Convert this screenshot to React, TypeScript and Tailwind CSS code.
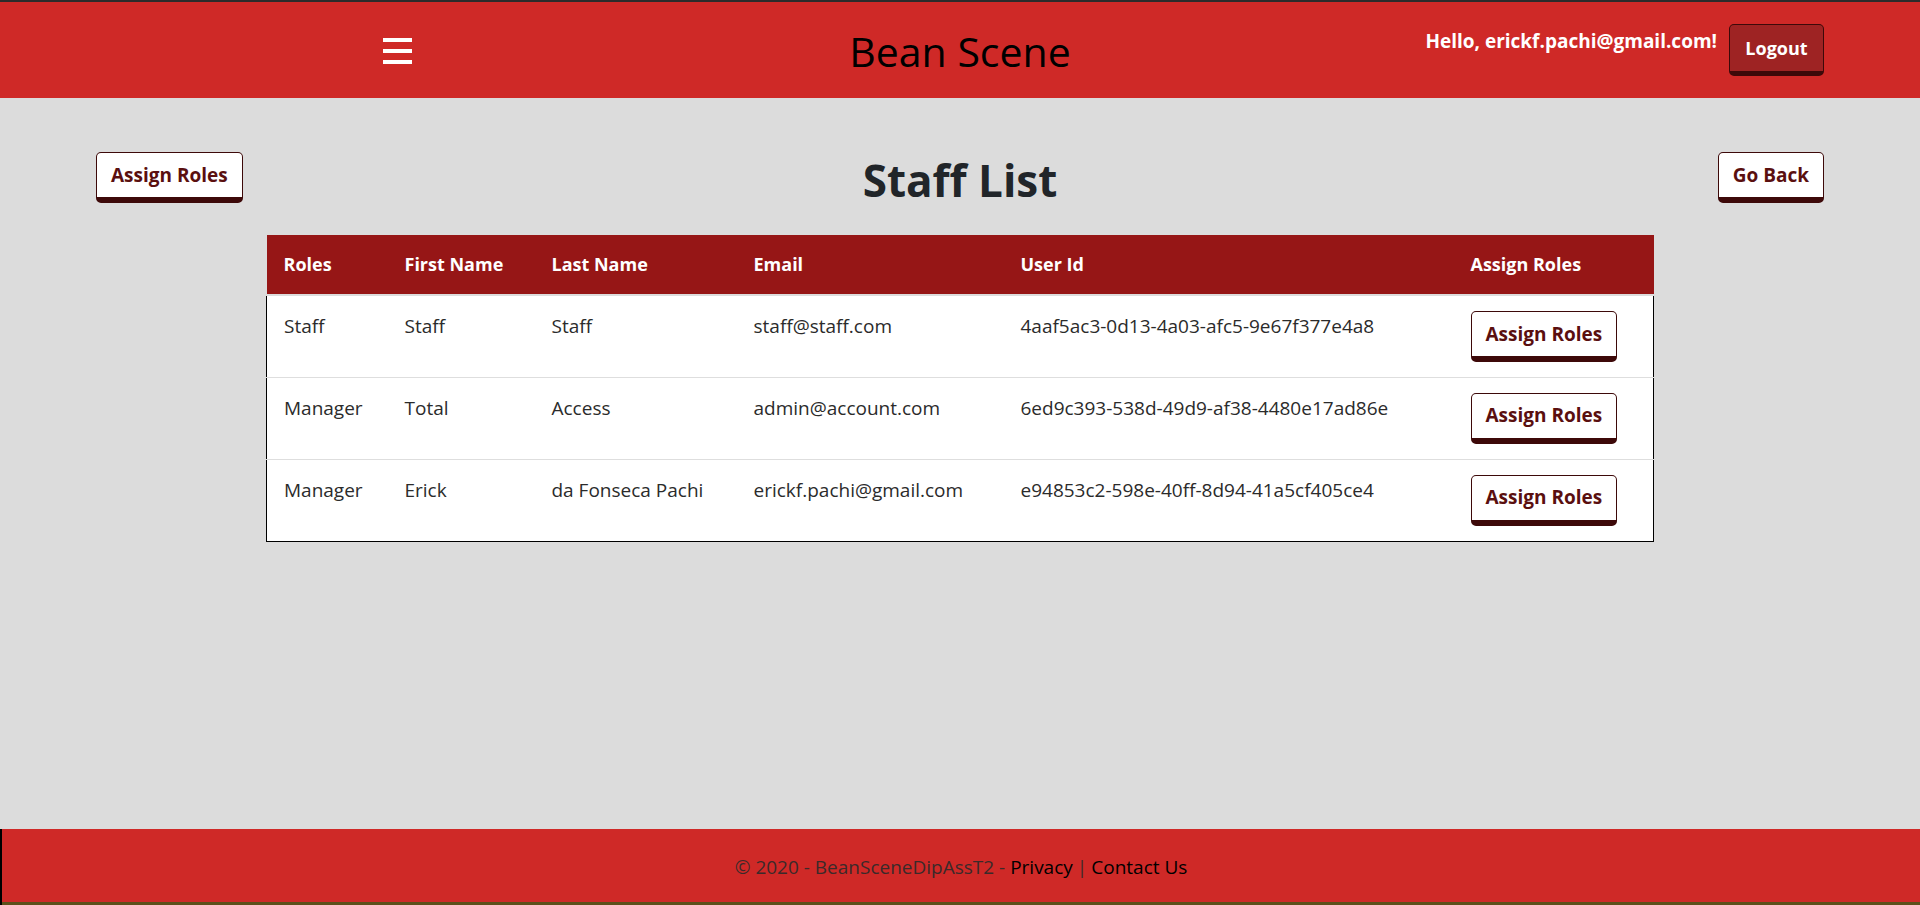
import React from 'react'

type Staff = { role: string; first: string; last: string; email: string; id: string }

const STAFF: Staff[] = [
  { role: 'Staff',   first: 'Staff', last: 'Staff',            email: 'staff@staff.com',         id: '4aaf5ac3-0d13-4a03-afc5-9e67f377e4a8' },
  { role: 'Manager', first: 'Total', last: 'Access',           email: 'admin@account.com',       id: '6ed9c393-538d-49d9-af38-4480e17ad86e' },
  { role: 'Manager', first: 'Erick', last: 'da Fonseca Pachi', email: 'erickf.pachi@gmail.com',  id: 'e94853c2-598e-40ff-8d94-41a5cf405ce4' },
]

function OutlineBtn({ children }: { children: React.ReactNode }) {
  return (
    <button className="h-[51px] px-[14px] bg-white text-[#5a0f0f] font-bold text-[19px] leading-none rounded-[5px] border border-[#3d0909] border-b-[6px] whitespace-nowrap">
      {children}
    </button>
  )
}

function Hamburger() {
  return (
    <div className="flex flex-col gap-[7px] w-[29px]">
      <span className="block h-[4px] bg-white" />
      <span className="block h-[4px] bg-white" />
      <span className="block h-[4px] bg-white" />
    </div>
  )
}

export default function App() {
  return (
    <div className="min-h-screen flex flex-col bg-[#dcdcdc] font-['Open_Sans',sans-serif] text-[#212529]">

      {/* ── header ── */}
      <header className="h-[98px] bg-[#cf2927] border-t-2 border-[#2b2b2b]">
        <div className="grid grid-cols-3 px-[96px] h-full">
          <div className="flex justify-center pt-[36px] pl-[27px]">
            <Hamburger />
          </div>
          <div className="flex justify-center pt-[21px]">
            <span className="text-[41px] leading-[56px] text-black">Bean Scene</span>
          </div>
          <div className="flex justify-end items-start gap-[12px] pt-[22px]">
            <span className="text-white font-bold text-[19px] leading-[26px] pt-[4px]">Hello, erickf.pachi@gmail.com!</span>
            <button className="h-[52px] w-[95px] bg-[#9e2323] text-white font-bold text-[18px] rounded-[5px] border border-[#3d0909] border-b-[5px]">
              Logout
            </button>
          </div>
        </div>
      </header>

      {/* ── main ── */}
      <main className="flex-1 px-[96px] pt-[54px]">
        <div className="grid grid-cols-[1fr_auto_1fr] items-start">
          <div className="flex justify-start">
            <OutlineBtn>Assign Roles</OutlineBtn>
          </div>
          <h1 className="text-[44px] leading-[56px] font-bold text-[#212529]">Staff List</h1>
          <div className="flex justify-end">
            <OutlineBtn>Go Back</OutlineBtn>
          </div>
        </div>

        <table className="mt-[27px] mx-auto w-[1387px] table-fixed border-collapse text-[19px]">
          <colgroup>
            <col className="w-[121px]" />
            <col className="w-[147px]" />
            <col className="w-[202px]" />
            <col className="w-[267px]" />
            <col className="w-[450px]" />
            <col className="w-[200px]" />
          </colgroup>
          <thead>
            <tr className="bg-[#961616] text-white text-left border-b-2 border-[#dcdcdc] text-[18px]">
              {['Roles', 'First Name', 'Last Name', 'Email', 'User Id', 'Assign Roles'].map(h => (
                <th key={h} className="px-[17px] h-[60px] font-bold leading-[27px]">{h}</th>
              ))}
            </tr>
          </thead>
          <tbody className="bg-white border-x border-b border-black">
            {STAFF.map((s, i) => (
              <tr key={s.id} className={i < STAFF.length - 1 ? 'border-b border-[#dedede]' : ''}>
                <td className="align-top px-[17px] pt-[17px] h-[82px] leading-[27px] text-[#2b2b2b]">{s.role}</td>
                <td className="align-top px-[17px] pt-[17px] leading-[27px] text-[#2b2b2b]">{s.first}</td>
                <td className="align-top px-[17px] pt-[17px] leading-[27px] text-[#2b2b2b]">{s.last}</td>
                <td className="align-top px-[17px] pt-[17px] leading-[27px] text-[#2b2b2b]">{s.email}</td>
                <td className="align-top px-[17px] pt-[17px] leading-[27px] text-[#2b2b2b] whitespace-nowrap">{s.id}</td>
                <td className="align-top px-[17px] pt-[15px]">
                  <OutlineBtn>Assign Roles</OutlineBtn>
                </td>
              </tr>
            ))}
          </tbody>
        </table>
      </main>

      {/* ── footer ── */}
      <footer className="h-[76px] bg-[#cf2927] border-l-2 border-black flex flex-col">
        <div className="flex-1 flex items-center justify-center text-[19px] pt-[4px]">
          <span className="text-[#3b2a2a]">© 2020 - BeanSceneDipAssT2 -&nbsp;</span>
          <a className="text-black">Privacy</a>
          <span className="text-[#3b2a2a] px-[4px]">|</span>
          <a className="text-black">Contact Us</a>
        </div>
        <div className="h-[3px] bg-[#5c4f1a]" />
      </footer>
    </div>
  )
}
